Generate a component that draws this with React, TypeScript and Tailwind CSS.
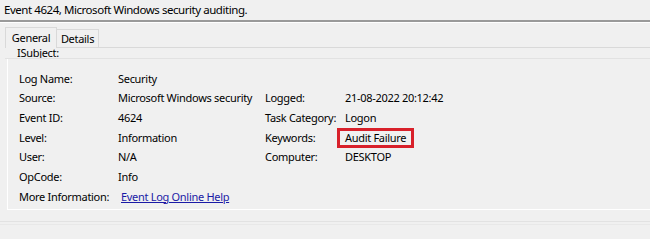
const rows: { label: string; value: React.ReactNode; label2?: string; value2?: React.ReactNode }[] = [
  { label: 'Log Name:', value: 'Security' },
  { label: 'Source:', value: 'Microsoft Windows security', label2: 'Logged:', value2: '21-08-2022 20:12:42' },
  { label: 'Event ID:', value: '4624', label2: 'Task Category:', value2: 'Logon' },
  {
    label: 'Level:',
    value: 'Information',
    label2: 'Keywords:',
    value2: (
      <span className="-ml-[8px] inline-block border-[3px] border-[#d8202a] px-[5px] leading-[14px]">Audit Failure</span>
    ),
  },
  { label: 'User:', value: 'N/A', label2: 'Computer:', value2: 'DESKTOP' },
  { label: 'OpCode:', value: 'Info' },
]

export default function App() {
  return (
    <div className="h-[239px] w-[650px] overflow-hidden whitespace-nowrap bg-[#f0f0f0] font-['Noto_Sans','Open_Sans',sans-serif] text-[11px] tracking-[-0.3px] text-black">
      <div className="h-[20px] pl-[4px] pt-[2px] text-[11.5px] leading-[16px] tracking-[-0.45px]">Event 4624, Microsoft Windows security auditing.</div>
      <div className="border-t-2 border-b border-t-[#9a9a9a] border-b-white" />

      <div className="pl-[5px] pt-[3px]">
        <div className="flex h-[21px] items-end">
          <div className="relative z-10 -mb-px flex h-[21px] w-[52px] items-start justify-center border border-b-0 border-[#d9d9d9] bg-[#f0f0f0] pt-[2px]">
            General
          </div>
          <div className="flex h-[18px] w-[42px] items-start justify-center border border-b-0 border-l-0 border-[#d9d9d9] pt-[1px]">
            Details
          </div>
        </div>
        <div className="border-t border-[#d9d9d9]">
          <div className="h-[11px] overflow-hidden border-b border-[#e2e2e2] pl-[12px] text-[11px] leading-[11px]">
            <span className="block -translate-y-[1px]">ISubject:</span>
          </div>
          <div className="ml-[2px] border-l border-b border-white pb-[2px] pt-[10px]">
            {rows.map((r) => (
              <div key={r.label} className="flex h-[19.7px] items-center pl-[11px]">
                <div className="w-[99px]">{r.label}</div>
                <div className="w-[147px]">{r.value}</div>
                <div className="w-[80px]">{r.label2}</div>
                <div>{r.value2}</div>
              </div>
            ))}
            <div className="flex h-[19.7px] items-center pl-[11px]">
              <div className="w-[102px]">More Information:</div>
              <a className="text-[#1a1aa6] underline">Event Log Online Help</a>
            </div>
          </div>
        </div>
      </div>
      <div className="mt-[11px] border-t border-[#e2e2e2]" />
      <div className="mt-[2px] border-t border-[#e8e8e8]" />
    </div>
  )
}
